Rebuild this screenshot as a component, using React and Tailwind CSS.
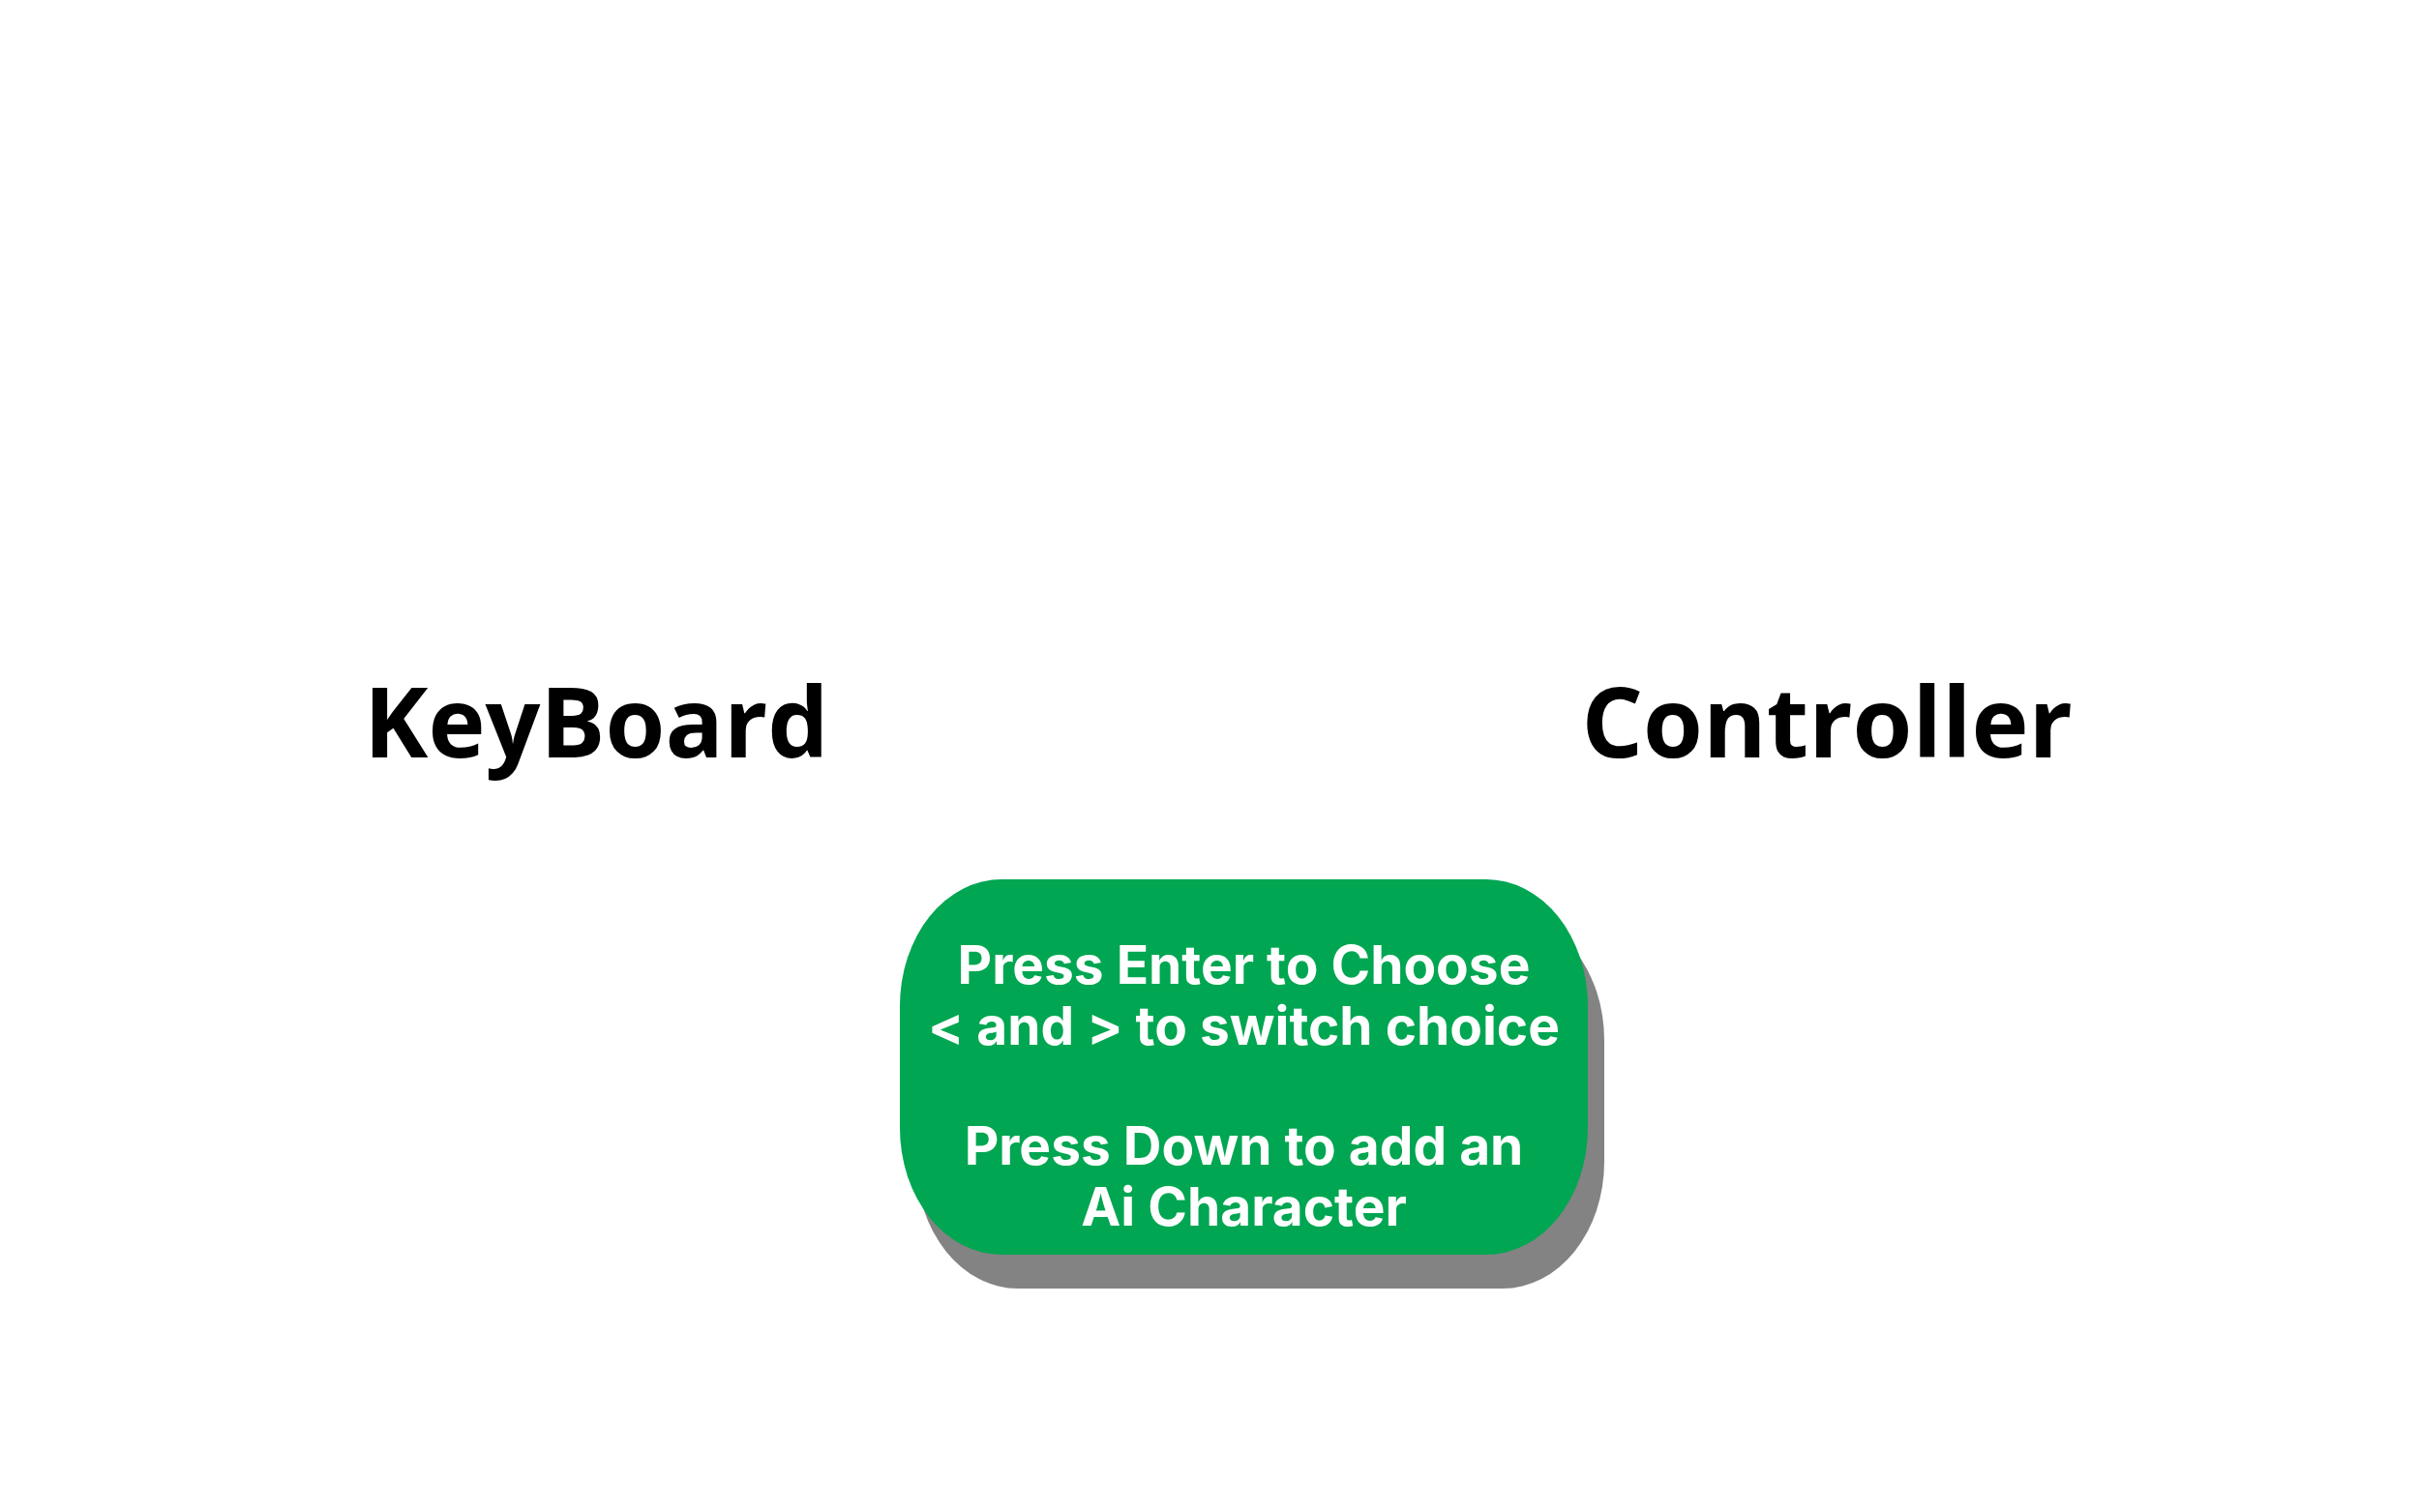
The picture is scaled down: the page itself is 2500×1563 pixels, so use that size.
const choices = ["KeyBoard", "Controller"];

export default function App() {
  return (
    <main className="min-h-screen bg-white pt-[676px] font-['Open_Sans',sans-serif]">
      <div className="flex justify-between pr-[358px] pl-[376px]">
        {choices.map((name) => (
          <button key={name} type="button" className="text-[100px] leading-[136px] font-bold text-black">
            {name}
          </button>
        ))}
      </div>
      <div className="mt-[97px] flex justify-center pl-[71px]">
        <section className="min-w-[711px] rounded-[105px/131px] bg-[#00a651] px-6 pt-[57px] pb-[18px] text-center font-['Inter',sans-serif] text-[55px] leading-[63px] font-bold whitespace-nowrap text-white shadow-[17px_35px_0_#838383]">
          <p>Press Enter to Choose</p>
          <p>&lt; and &gt; to switch choice</p>
          <p className="mt-[61px]">Press Down to add an</p>
          <p>Ai Character</p>
        </section>
      </div>
    </main>
  );
}
